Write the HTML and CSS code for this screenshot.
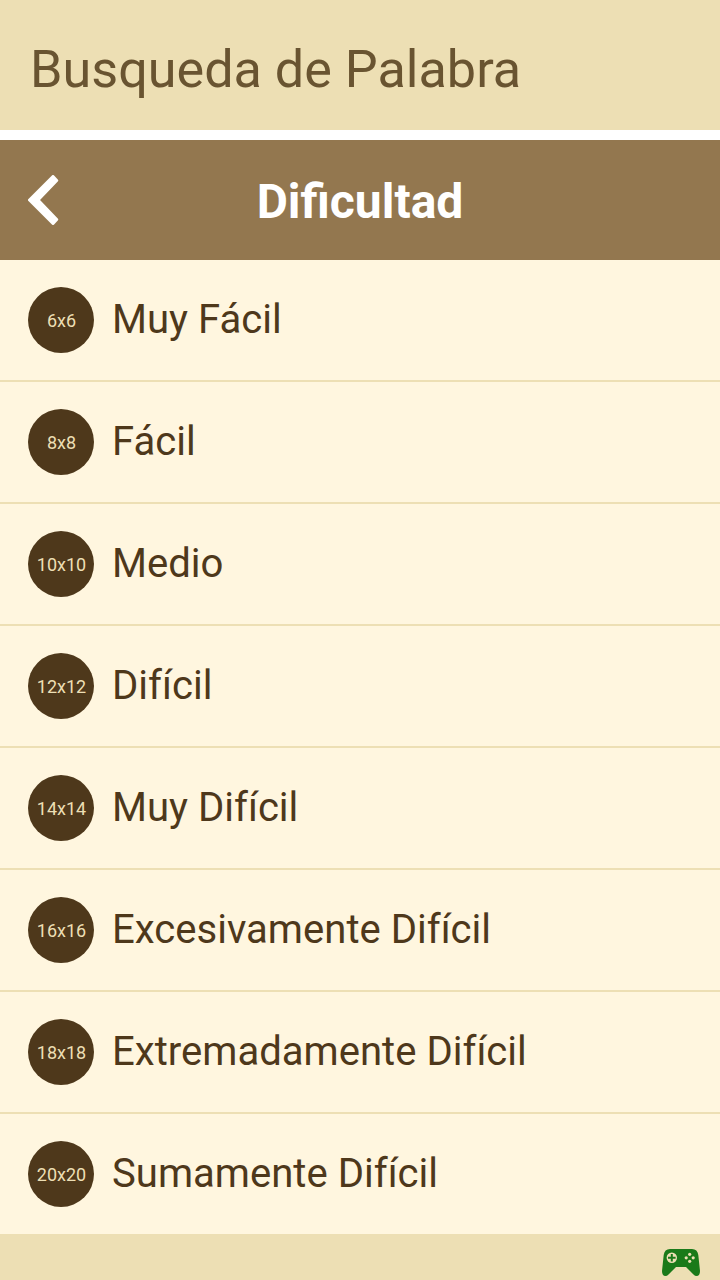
FILE: index.html
```html
<!DOCTYPE html>
<html lang="es">
  <head>
    <meta charset="UTF-8" />
    <meta name="viewport" content="width=device-width, initial-scale=1.0" />
    <title>Busqueda de Palabra</title>
    <link rel="stylesheet" href="styles.css">
  </head>
  <body>
    <header class="title">Busqueda de Palabra</header>
    <div class="bar">
      <svg class="back" viewBox="0 0 32 50" width="32" height="50">
        <path d="M25 1.500 L28.700 5.500 L10 25 L28.700 44.500 L25 48.500 L1.500 25 Z" fill="#fff" stroke="#fff" stroke-width="3" stroke-linejoin="round" />
      </svg>
      <h1>Dificultad</h1>
    </div>
    <ul class="list">
      <li><span class="size">6x6</span><span class="name">Muy Fácil</span></li>
      <li><span class="size">8x8</span><span class="name">Fácil</span></li>
      <li><span class="size">10x10</span><span class="name">Medio</span></li>
      <li><span class="size">12x12</span><span class="name">Difícil</span></li>
      <li><span class="size">14x14</span><span class="name">Muy Difícil</span></li>
      <li><span class="size">16x16</span><span class="name">Excesivamente Difícil</span></li>
      <li><span class="size">18x18</span><span class="name">Extremadamente Difícil</span></li>
      <li><span class="size">20x20</span><span class="name">Sumamente Difícil</span></li>
    </ul>
    <footer class="footer">
      <svg viewBox="0 0 38 28" width="38" height="28">
        <path d="M8 0 H30 Q35.500 0 36.300 6 L38 22 Q38 27 34.500 27 Q33 27 31.500 25.500 L24 18 H14 L6.500 25.500 Q5 27 3.500 27 Q0 27 0 22 L1.700 6 Q2.500 0 8 0 Z" fill="#1a7a19" />
        <circle cx="9.800" cy="8.800" r="5.200" fill="#eddfb4" />
        <path d="M9.800 5 V12.600 M6 8.800 H13.600" stroke="#1a7a19" stroke-width="2" />
        <g fill="#eddfb4">
          <circle cx="27.700" cy="5.300" r="1.600" />
          <circle cx="27.700" cy="12.300" r="1.600" />
          <circle cx="24.200" cy="8.800" r="1.600" />
          <circle cx="31.200" cy="8.800" r="1.600" />
        </g>
      </svg>
    </footer>
  </body>
</html>
```
FILE: styles.css
```css
body {
  margin: 0;
  background: #eddfb4;
  font-family: Roboto, sans-serif;
  color: #4e381b;
}
.title {
  height: 130px;
  box-sizing: border-box;
  padding: 10px 30px 0;
  font-size: 52.15px;
  line-height: 120px;
  color: #695431;
}
.bar {
  display: grid;
  grid-template-columns: 60px 1fr 60px;
  align-items: center;
  height: 120px;
  border-top: 10px solid #fff;
  background: #93774f;
  color: #fff;
}
.back {
  margin-left: 28px;
}
h1 {
  margin: 0;
  padding-top: 3px;
  text-align: center;
  font-size: 48px;
  font-weight: bold;
}
.list {
  margin: 0;
  padding: 0;
  list-style: none;
  background: #fff6df;
}
.list li {
  display: flex;
  align-items: center;
  height: 120px;
  padding-left: 28px;
  border-bottom: 2px solid #eddfb4;
}
.list li:last-child {
  border-bottom: none;
}
.size {
  box-sizing: border-box;
  width: 66px;
  height: 66px;
  padding-left: 1px;
  margin-right: 18px;
  border-radius: 50%;
  background: #4e381b;
  color: #eddfb4;
  font-size: 18px;
  line-height: 68px;
  text-align: center;
}
.name {
  padding-bottom: 2px;
  font-size: 40.1px;
}
.footer {
  display: flex;
  justify-content: flex-end;
  padding: 15px 20px 0 0;
  height: 31px;
}
```
